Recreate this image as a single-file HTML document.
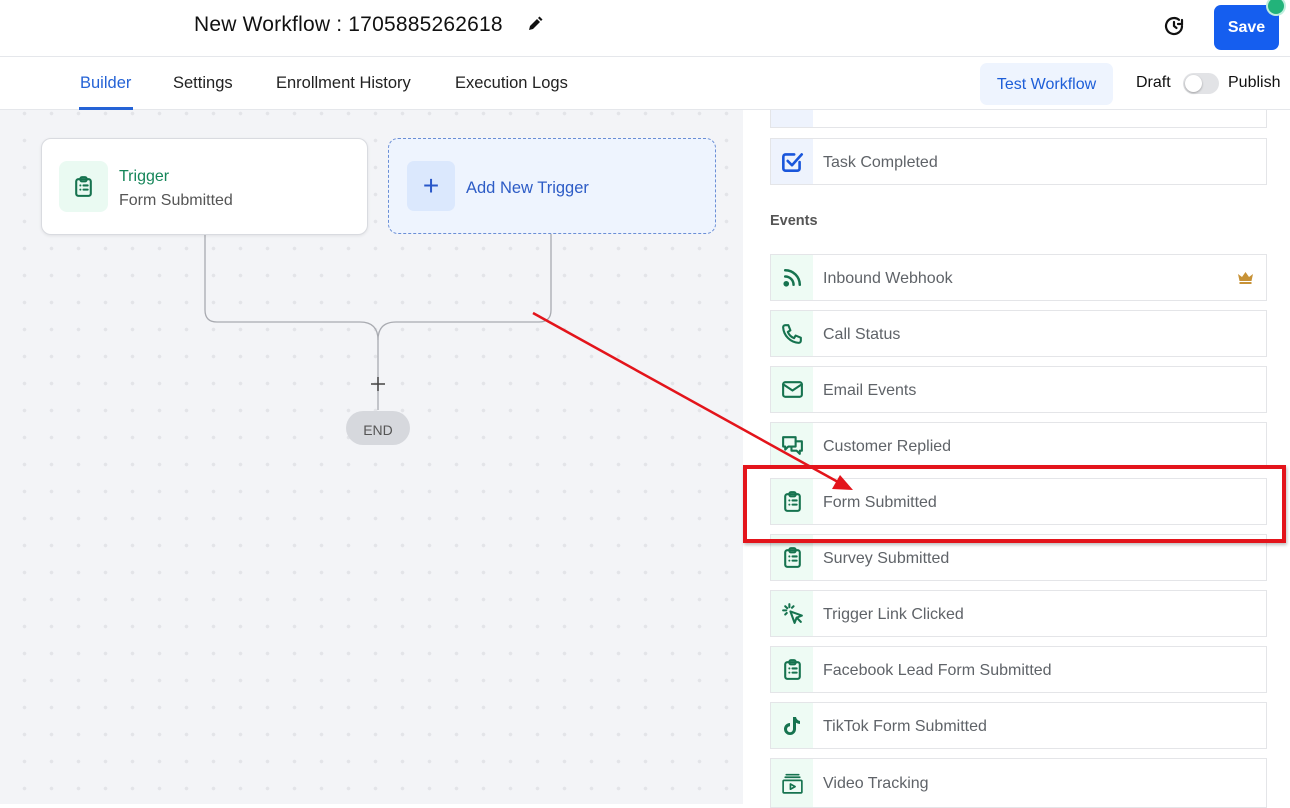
<!DOCTYPE html>
<html><head><meta charset="utf-8"><style>
*{box-sizing:border-box;margin:0;padding:0}
body{width:1290px;height:804px;overflow:hidden;font-family:"Liberation Sans",sans-serif;background:#fff;position:relative}
.abs{position:absolute}
#canvas{left:0;top:110px;width:743px;height:694px;background-color:#f3f4f7;background-image:radial-gradient(circle,#e3e4e8 1.6px,transparent 2px);background-size:27px 27px;background-position:11px -10px}
.row{position:absolute;left:770px;width:497px;height:47px;border:1px solid #e4e5e8;background:#fff;display:flex;align-items:center}
.row .ic{width:42px;height:100%;background:#eefbf4;display:flex;align-items:center;justify-content:center}
.row .t{margin-left:10px;font-size:16px;color:#5f6368;padding-top:2px}
svg.i{width:25px;height:25px;fill:none;stroke:#16734f;stroke-width:2;stroke-linecap:round;stroke-linejoin:round}
.top{z-index:5}
</style></head><body>
<div id="canvas" class="abs"></div>
<div class="row" style="top:81px;height:47px"><div class="ic" style="background:#eef3fd"></div><span class="t">Task Reminder</span></div>

<div class="abs top" style="left:0;top:0;width:1290px;height:57px;border-bottom:1px solid #e5e7eb;background:#fff"></div>
<div class="abs top" style="left:194px;top:13px;font-size:21px;color:#111;letter-spacing:.2px">New Workflow : 1705885262618</div>
<svg class="abs top" style="left:527px;top:16px" width="16" height="16" viewBox="0 0 16 16"><path d="M2 14l1-4 7-7 3 3-7 7z" fill="#111"/><path d="M11 2l1.5-1.5 3 3L14 5z" fill="#111"/></svg>
<svg class="abs top" style="left:1162px;top:14px" width="24" height="24" viewBox="0 0 24 24" fill="none" stroke="#111" stroke-width="2.2" stroke-linecap="round"><path d="M20 12a8 8 0 1 1-3-6.2"/><path d="M12 8v4l2.5 2"/><path d="M20 6v4h-4"/></svg>
<div class="abs top" style="left:1214px;top:5px;width:65px;height:45px;background:#155eef;border-radius:7px;color:#fff;font-weight:bold;font-size:16px;display:flex;align-items:center;justify-content:center">Save</div>
<div class="abs top" style="left:1268px;top:-2px;width:16px;height:16px;border-radius:50%;background:#22b37a;box-shadow:0 0 0 2px #bfeedd"></div>
<div class="abs top" style="left:0;top:57px;width:1290px;height:53px;background:#fff;border-bottom:1px solid #e5e7eb"></div>
<div class="abs top" style="left:80px;top:74px;font-size:16.5px;color:#2563d6">Builder</div>
<div class="abs top" style="left:79px;top:107px;width:54px;height:3px;background:#2563d6"></div>
<div class="abs top" style="left:173px;top:74px;font-size:16.5px;color:#222">Settings</div>
<div class="abs top" style="left:276px;top:74px;font-size:16.5px;color:#222">Enrollment History</div>
<div class="abs top" style="left:455px;top:74px;font-size:16.5px;color:#222">Execution Logs</div>
<div class="abs top" style="left:980px;top:63px;width:133px;height:42px;background:#eef4fe;border-radius:7px;color:#1d5ed8;font-size:16px;display:flex;align-items:center;justify-content:center;padding-top:2px">Test Workflow</div>
<div class="abs top" style="left:1136px;top:74px;font-size:16px;color:#111">Draft</div>
<div class="abs top" style="left:1183px;top:73px;width:36px;height:21px;border-radius:11px;background:#e2e3e6"><div style="position:absolute;left:2px;top:2px;width:17px;height:17px;border-radius:50%;background:#fff;box-shadow:0 1px 2px rgba(0,0,0,.3)"></div></div>
<div class="abs top" style="left:1228px;top:74px;font-size:16px;color:#111">Publish</div>

<svg class="abs" style="left:0;top:0" width="743" height="804" fill="none" stroke="#a9abb1" stroke-width="1.3">
<path d="M205 234V310q0 12 12 12H360q18 0 18 18V410"/>
<path d="M551 234V310q0 12-12 12H396q-18 0-18 18"/>
<path d="M371 384h14M378 377v14" stroke="#444" stroke-width="1.5"/>
</svg>
<div class="abs" style="left:346px;top:411px;width:64px;height:34px;border-radius:17px;background:#d6d8dd;color:#555;font-size:14px;display:flex;align-items:center;justify-content:center;padding-top:3px">END</div>
<div class="abs" style="left:41px;top:138px;width:327px;height:97px;background:#fff;border:1px solid #d9dbe0;border-radius:10px;box-shadow:0 1px 3px rgba(0,0,0,.08)"></div>
<div class="abs" style="left:59px;top:161px;width:49px;height:51px;background:#eafaf2;border-radius:8px;display:flex;align-items:center;justify-content:center"><svg class="i" viewBox="0 0 24 24"><rect x="5" y="5" width="14" height="16" rx="2"/><rect x="9" y="3" width="6" height="4" rx="1.5"/><path d="M9 11h.01M12 11h4M9 15h.01M12 15h4"/></svg></div>
<div class="abs" style="left:119px;top:168px;font-size:16px;color:#16865a">Trigger</div>
<div class="abs" style="left:119px;top:192px;font-size:16px;color:#555">Form Submitted</div>
<div class="abs" style="left:388px;top:138px;width:328px;height:96px;background:#eef4fe;border:1.3px dashed #6b8fd6;border-radius:10px"></div>
<div class="abs" style="left:407px;top:161px;width:48px;height:50px;background:#dbe8fd;border-radius:7px;color:#2957c9;font-size:28px;display:flex;align-items:center;justify-content:center">+</div>
<div class="abs" style="left:466px;top:179px;font-size:16.5px;color:#2d5cc6">Add New Trigger</div>

<div class="row" style="top:138px"><div class="ic" style="background:#eef3fd"><svg viewBox="0 0 24 24" width="26" height="26" fill="none" stroke="#1a56db" stroke-width="2.4" stroke-linecap="round" stroke-linejoin="round"><path d="M19 12v6a2 2 0 0 1-2 2H6a2 2 0 0 1-2-2V7a2 2 0 0 1 2-2h8"/><path d="M8 11l4 4 9-10"/></svg></div><span class="t">Task Completed</span></div>
<div class="abs" style="left:770px;top:213px;font-size:14.5px;font-weight:bold;color:#555">Events</div>
<div class="row" style="top:254px"><div class="ic"><svg class="i" viewBox="0 0 24 24" style="stroke-width:2.4"><path d="M5 11a8 8 0 0 1 8 8M5 5a14 14 0 0 1 14 14"/><circle cx="6" cy="18" r="1.5" fill="#16734f"/></svg></div><span class="t">Inbound Webhook</span><svg style="position:absolute;right:12px;top:15px" width="17" height="15" viewBox="0 0 17 15"><path d="M1 4l4 3 3.5-5 3.5 5 4-3-1.5 7H2.5z" fill="#c79236"/><rect x="2.5" y="12" width="12" height="2" fill="#c79236"/></svg></div>
<div class="row" style="top:310px"><div class="ic"><svg class="i" viewBox="0 0 24 24"><path d="M5 4h3l2 5-2.5 1.5a11 11 0 0 0 6 6L15 14l5 2v3a2 2 0 0 1-2 2A16 16 0 0 1 3 6a2 2 0 0 1 2-2"/></svg></div><span class="t">Call Status</span></div>
<div class="row" style="top:366px"><div class="ic"><svg class="i" viewBox="0 0 24 24"><rect x="3" y="5" width="18" height="14" rx="2"/><path d="M3 7l9 6 9-6"/></svg></div><span class="t">Email Events</span></div>
<div class="row" style="top:422px"><div class="ic"><svg class="i" viewBox="0 0 24 24"><path d="M3 4h12v9H8l-3 3v-3H3z"/><path d="M15 8h6v9h-2v3l-3-3h-5v-4"/></svg></div><span class="t">Customer Replied</span></div>
<div class="row" style="top:478px"><div class="ic"><svg class="i" viewBox="0 0 24 24"><rect x="5" y="5" width="14" height="16" rx="2"/><rect x="9" y="3" width="6" height="4" rx="1.5"/><path d="M9 11h.01M12 11h4M9 15h.01M12 15h4"/></svg></div><span class="t">Form Submitted</span></div>
<div class="row" style="top:534px"><div class="ic"><svg class="i" viewBox="0 0 24 24"><rect x="5" y="5" width="14" height="16" rx="2"/><rect x="9" y="3" width="6" height="4" rx="1.5"/><path d="M9 11h.01M12 11h4M9 15h.01M12 15h4"/></svg></div><span class="t">Survey Submitted</span></div>
<div class="row" style="top:590px"><div class="ic"><svg class="i" viewBox="0 0 24 24"><path d="M10 10l4 11 2-5 5-2z"/><path d="M16 16l4 4M9 3v3M3 9h3M5 5l2 2M13 5l-1.5 1.5M5 13l1.5-1.5"/></svg></div><span class="t">Trigger Link Clicked</span></div>
<div class="row" style="top:646px"><div class="ic"><svg class="i" viewBox="0 0 24 24"><rect x="5" y="5" width="14" height="16" rx="2"/><rect x="9" y="3" width="6" height="4" rx="1.5"/><path d="M9 11h.01M12 11h4M9 15h.01M12 15h4"/></svg></div><span class="t">Facebook Lead Form Submitted</span></div>
<div class="row" style="top:702px"><div class="ic"><svg viewBox="0 0 24 24" width="24" height="24"><path d="M13 3h3a5 5 0 0 0 4 4v3a8 8 0 0 1-4-1.3V15a6 6 0 1 1-6-6v3.2a3 3 0 1 0 3 2.8z" fill="#16734f"/></svg></div><span class="t">TikTok Form Submitted</span></div>
<div class="row" style="top:758px;height:50px"><div class="ic"><svg class="i" viewBox="0 0 24 24" style="stroke-width:1.6"><rect x="3" y="9" width="18" height="12" rx="1"/><path d="M5 6h14M6 3.5h12M10 12.5v5l4.5-2.5z"/></svg></div><span class="t">Video Tracking</span></div>

<div class="abs" style="left:743px;top:465px;width:543px;height:78px;border:4px solid #e3141b;box-shadow:1px 2px 3px rgba(0,0,0,.25)"></div>
<svg class="abs" style="left:0;top:0" width="1290" height="804"><line x1="533" y1="313" x2="838" y2="482" stroke="#e3141b" stroke-width="2.5"/><path d="M853 490L832 489 840 475z" fill="#e3141b"/></svg>
</body></html>
